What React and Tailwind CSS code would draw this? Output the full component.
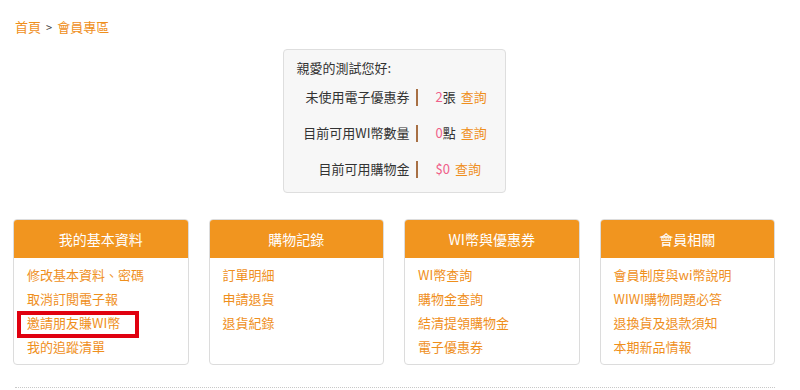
import React from "react";

const font = { fontFamily: '"Noto Sans CJK TC", "Noto Sans", sans-serif' };

const cards = [
  { title: "我的基本資料", links: ["修改基本資料、密碼", "取消訂閱電子報", "邀請朋友賺WI幣", "我的追蹤清單"], mark: true },
  { title: "購物記錄", links: ["訂單明細", "申請退貨", "退貨紀錄"] },
  { title: "WI幣與優惠券", links: ["WI幣查詢", "購物金查詢", "結清提領購物金", "電子優惠券"] },
  { title: "會員相關", links: ["會員制度與wi幣說明", "WIWI購物問題必答", "退換貨及退款須知", "本期新品情報"] },
];

const rows = [
  { label: "未使用電子優惠券", num: "2", unit: "張" },
  { label: "目前可用WI幣數量", num: "0", unit: "點" },
  { label: "目前可用購物金", num: "$0", unit: "" },
];

export default function App() {
  return (
    <div className="w-[800px] h-[390px] bg-white overflow-hidden text-[13px] text-[#333]" style={font}>
      <div className="ml-[13px] w-[762px]">
        <div className="pt-[18px] pl-[2px] h-[49px] flex items-start leading-[18px]">
          <span className="text-[#ef8f1c]">首頁</span>
          <span className="mx-[5px] text-[11px] text-[#444]">&gt;</span>
          <span className="text-[#ef8f1c]">會員專區</span>
        </div>
        <div className="flex justify-center">
          <div className="w-[223px] h-[144px] bg-[#f7f7f7] border border-[#dedede] rounded-[4px] pt-[9px]">
            <div className="pl-[13px] leading-[18px]">親愛的測試您好:</div>
            <div className="mt-[2px]">
              {rows.map((r) => (
                <div key={r.label} className="h-[36px] flex items-center">
                  <div className="w-[126px] text-right leading-[18px]">{r.label}</div>
                  <div className="ml-[6px] w-[2px] h-[17px] bg-[#a87044]" />
                  <div className="ml-[18px] leading-[18px] flex">
                    <span className="text-[#f0608a]">{r.num}</span>
                    {r.unit && <span>{r.unit}</span>}
                    <span className="ml-[5px] text-[#ef8f1c]">查詢</span>
                  </div>
                </div>
              ))}
            </div>
          </div>
        </div>
        <div className="mt-[26px] grid grid-cols-4 gap-x-[20px]">
          {cards.map((c) => (
            <div key={c.title} className="relative h-[146px] border border-[#dcdcdc] rounded-[4px] overflow-visible">
              <div className="h-[38px] bg-[#f1951f] rounded-t-[3px] flex items-center justify-center text-white text-[14px]">
                {c.title}
              </div>
              <div className="pt-[5px] pl-[13px] flex flex-col">
                {c.links.map((l) => (
                  <span key={l} className="leading-[24px] text-[#ef8f1c]">{l}</span>
                ))}
              </div>
              {c.mark && (
                <div className="absolute left-[3px] top-[91px] w-[122px] h-[27px] border-4 border-[#e0000f]" />
              )}
            </div>
          ))}
        </div>
        <div className="mt-[22px] ml-[2px] border-t border-dotted border-[#c8c8c8]" />
      </div>
    </div>
  );
}
